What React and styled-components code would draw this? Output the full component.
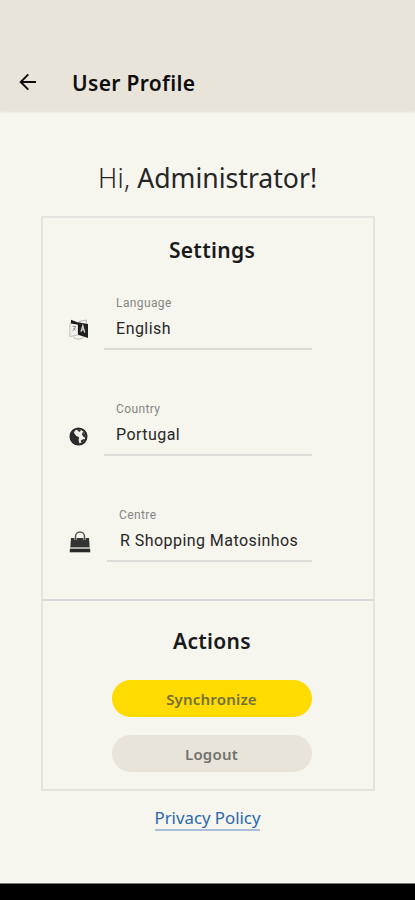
import React from 'react';
import styled, { createGlobalStyle } from 'styled-components';

const GlobalStyle = createGlobalStyle`
    * {
        box-sizing: border-box;
    }

    body {
        margin: 0;
        background: #f6f5ee;
        font-family: 'Noto Sans', 'Open Sans', sans-serif;
    }
`;

const Screen = styled.div`
    display: flex;
    flex-direction: column;
    height: 900px;
    background: #f6f5ee;
    overflow: hidden;
`;

const Header = styled.header`
    display: flex;
    align-items: flex-end;
    flex-shrink: 0;
    height: 111px;
    padding: 0 19px 12px;
    background: #e8e4da;
    box-shadow: 0 1px 2px rgba(120, 115, 100, 0.15);
`;

const BackButton = styled.button`
    display: flex;
    align-items: center;
    width: 53px;
    height: 34px;
    padding: 0;
    border: 0;
    background: none;
    color: #0c0c0c;
`;

const HeaderTitle = styled.h1`
    margin: 0;
    font-size: 21px;
    font-weight: 600;
    line-height: 32px;
    letter-spacing: 0.32px;
    color: #0e0e0e;
`;

const Content = styled.main`
    display: flex;
    flex: 1;
    flex-direction: column;
    align-items: center;
    padding-top: 48px;
`;

const Greeting = styled.h2`
    margin: 0;
    font-size: 26.6px;
    font-weight: 400;
    line-height: 38px;
    color: #262626;
    white-space: nowrap;
`;

const GreetingWord = styled.span`
    font-weight: 350;
    letter-spacing: 0.3px;
`;

const Card = styled.div`
    display: flex;
    flex-direction: column;
    width: 334px;
    height: 575px;
    margin-top: 19px;
    border: 2px solid #e4e4e1;
`;

const Section = styled.section`
    display: flex;
    flex-direction: column;
    height: ${(props) => props.height};
    padding: 0 61px 0 25px;
    border-bottom: ${(props) => (props.$divided ? '2px solid #d9d9dc' : '0')};
`;

const SectionTitle = styled.h3`
    margin: ${(props) => props.$top} 0 0 45px;
    font-size: 21px;
    font-weight: 600;
    line-height: 30px;
    letter-spacing: 0.3px;
    text-align: center;
    color: #1a1a1a;
`;

const FieldList = styled.div`
    display: flex;
    flex-direction: column;
    gap: 50px;
    margin-top: 30px;
`;

const FieldRow = styled.div`
    display: flex;
    justify-content: space-between;
    height: 56px;
`;

const FieldIcon = styled.span`
    display: flex;
    align-items: center;
    height: 22px;
    margin-top: 24px;
    padding-left: 1px;
`;

const Field = styled.div`
    width: ${(props) => props.width}px;
    height: 55px;
    padding-left: 12.6px;
    border-bottom: 2px solid #dcdcd8;
    font-family: Roboto, 'Liberation Sans', sans-serif;
    white-space: nowrap;
`;

const FieldLabel = styled.div`
    font-size: 12px;
    line-height: 16px;
    letter-spacing: 0.38px;
    color: #868683;
`;

const FieldValue = styled.div`
    margin-top: 7px;
    padding-left: ${(props) => props.$inset || 0}px;
    font-size: 16px;
    line-height: 22px;
    letter-spacing: 0.44px;
    color: #272727;
`;

const ButtonStack = styled.div`
    display: flex;
    flex-direction: column;
    gap: 18px;
    margin: 24px 0 0 44px;
`;

const PillButton = styled.button`
    width: 200px;
    height: 37px;
    padding: 0;
    border: 0;
    border-radius: 19px;
    background: ${(props) => (props.$primary ? '#ffdb00' : '#e8e4da')};
    color: ${(props) => (props.$primary ? '#74703c' : '#74726d')};
    font-family: inherit;
    font-size: 15px;
    font-weight: 600;
    letter-spacing: 0.2px;
`;

const PolicyLink = styled.a`
    margin-top: 16px;
    padding-bottom: 1px;
    border-bottom: 2px solid #a9bfd9;
    font-size: 16.8px;
    line-height: 21px;
    color: #2a67ae;
    text-decoration: none;
`;

const NavigationBar = styled.footer`
    flex-shrink: 0;
    height: 17px;
    border-top: 1px solid #777975;
    background: #000;
`;

const BackArrow = () => (
    <svg width="18" height="18" viewBox="0 0 18 18" fill="none" stroke="currentColor" strokeWidth="1.9">
        <path d="M17 9H2M9.3 1.4 1.7 9l7.6 7.6" />
    </svg>
);

const LanguageIcon = () => (
    <svg width="20" height="22" viewBox="0 0 20 22">
        <path d="M2 2.5 9 4.5V16L.8 17.5V5.5L2 5Z" fill="#f2f1eb" stroke="#b5b5b0" strokeWidth=".8" />
        <path d="M2 .8 9.5 3.7v2L2 4.5Z" fill="#181818" />
        <path d="M9 3.2 19 5v14L9 15.8Z" fill="#202020" />
        <path d="m12 12.8 1.8-6 2 6.8M12.6 10.8h2.5" fill="none" stroke="#c9c9c4" strokeWidth="1.4" />
        <path d="M3.6 7.4h3.2M6.4 7.4c-.4 2.6-1.4 3.7-2.8 4.6M4.4 9l2 2.4" fill="none" stroke="#85857f" strokeWidth=".9" />
        <path d="M10 2.6 17.3 1v3.6M4.2 18.2c2.7 2.3 7.2 2.6 10.4.2" fill="none" stroke="#b5b5b0" strokeWidth="1" />
    </svg>
);

const GlobeIcon = () => (
    <svg width="19" height="19" viewBox="0 0 20 20">
        <circle cx="10" cy="10" r="8.4" fill="#f0efe9" stroke="#262626" strokeWidth="2.2" />
        <path d="M3.2 4.6 6.3 3.2 5.2 6l2.3 3.1 3.1 1.6-.5 3 .9 4.3C5.5 18.2 2 14.3 2 9.6Z" fill="#2b2b2b" />
        <path d="m9.2 1.8 3.4 1.6-1.5 1.8-2.4-1.5ZM14.8 4.8l3 3.8-.4 3-2.3-1.4-1.5-2.6ZM12.2 14.4l3.1-1.7 1.8.4-3.7 4.3Z" fill="#343434" />
    </svg>
);

const ShoppingIcon = () => (
    <svg width="22" height="24" viewBox="0 0 22 24">
        <path d="M6.5 10V6.4a4.5 4.5 0 0 1 9 0V10" fill="none" stroke="#555" strokeWidth="1.5" />
        <path d="M2 8h3.4v2h2.2V8h6.8v2h2.2V8H20l.7 9.4H1.3Z" fill="#343434" />
        <path d="M1.2 17.4h19.6v1.5H1.2Z" fill="#b5b5b0" />
        <path d="M.8 18.9h20.4v3.4H.8Z" fill="#282828" />
    </svg>
);

const fields = [
    { label: 'Language', value: 'English', icon: <LanguageIcon />, width: 208 },
    { label: 'Country', value: 'Portugal', icon: <GlobeIcon />, width: 208 },
    { label: 'Centre', value: 'R Shopping Matosinhos', icon: <ShoppingIcon />, width: 205, inset: 1 },
];

const App = () => {
    return (
        <>
            <GlobalStyle />
            <Screen>
                <Header>
                    <BackButton aria-label="Back">
                        <BackArrow />
                    </BackButton>
                    <HeaderTitle>User Profile</HeaderTitle>
                </Header>
                <Content>
                    <Greeting>
                        <GreetingWord>Hi,</GreetingWord> Administrator!
                    </Greeting>
                    <Card>
                        <Section height="383px" $divided>
                            <SectionTitle $top="17px">Settings</SectionTitle>
                            <FieldList>
                                {fields.map((item) => (
                                    <FieldRow key={item.label}>
                                        <FieldIcon>{item.icon}</FieldIcon>
                                        <Field width={item.width}>
                                            <FieldLabel>{item.label}</FieldLabel>
                                            <FieldValue $inset={item.inset}>{item.value}</FieldValue>
                                        </Field>
                                    </FieldRow>
                                ))}
                            </FieldList>
                        </Section>
                        <Section height="188px">
                            <SectionTitle $top="25px">Actions</SectionTitle>
                            <ButtonStack>
                                <PillButton $primary>Synchronize</PillButton>
                                <PillButton>Logout</PillButton>
                            </ButtonStack>
                        </Section>
                    </Card>
                    <PolicyLink href="#">Privacy Policy</PolicyLink>
                </Content>
                <NavigationBar />
            </Screen>
        </>
    );
};

export default App;
